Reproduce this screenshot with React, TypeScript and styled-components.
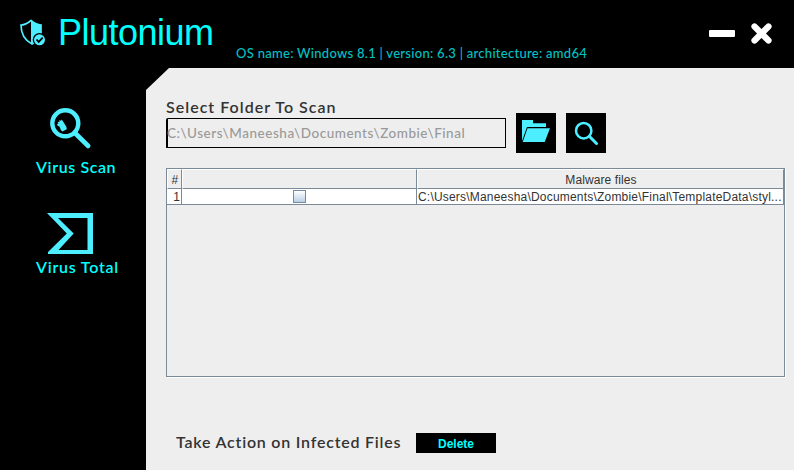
import React from "react";
import styled, { createGlobalStyle } from "styled-components";

const ICON = "#4deeff";
const LINE = "#7a8a99";

const GlobalStyle = createGlobalStyle`
  * { box-sizing: border-box; }
  body { margin: 0; background: #000; overflow: hidden; }
`;

const Window = styled.div`
  display: flex;
  flex-direction: column;
  width: 794px;
  height: 470px;
  background: #000;
  font-family: "Liberation Sans", Arial, sans-serif;
`;

const Header = styled.header`
  display: flex;
  height: 68px;
  padding-left: 20px;
  flex: none;
`;

const Logo = styled.svg`
  margin-top: 19px;
  flex: none;
`;

const Title = styled.h1`
  margin: 12px 0 0 12px;
  width: 178px;
  font-size: 36px;
  line-height: 41px;
  font-weight: 400;
  letter-spacing: -0.5px;
  color: #00ffff;
`;

const SystemInfo = styled.div`
  width: 473px;
  margin-top: 45px;
  font: 500 13px/17px Lato, sans-serif;
  letter-spacing: 0.28px;
  white-space: nowrap;
  color: #00c2c6;
`;

const WindowControls = styled.div`
  display: flex;
  gap: 16px;
  margin-top: 23px;
`;

const PlainButton = styled.button`
  display: block;
  width: max-content;
  height: max-content;
  padding: 0;
  border: 0;
  background: none;
  svg { display: block; }
`;

const Body = styled.div`
  display: flex;
  flex: 1;
`;

const Sidebar = styled.nav`
  width: 146px;
  padding: 37px 0 0 36px;
`;

const NavItem = styled.div`
  height: 100px;
  svg { display: block; margin-left: 10px; }
`;

const Label = styled.span<{ $color?: string; $spacing?: number }>`
  display: block;
  font: 600 16px/20px Lato, sans-serif;
  letter-spacing: ${(p) => p.$spacing ?? 0}px;
  white-space: nowrap;
  color: ${(p) => p.$color ?? "#333"};
`;

const Main = styled.main`
  flex: 1;
  display: flex;
  flex-direction: column;
  padding: 29px 8px 0 20px;
  background: #eee;
  clip-path: polygon(23px 0, 100% 0, 100% 100%, 0 100%, 0 22px);
`;

const FolderRow = styled.div`
  display: flex;
  align-items: flex-end;
  gap: 10px;
  height: 56px;
`;

const PathGroup = styled.div`
  width: 340px;
  height: 56px;
`;

const PathField = styled.div`
  height: 30px;
  margin-top: 1px;
  border: 1px solid #000;
  border-left-width: 2px;
  border-top-left-radius: 2px;
  font: 500 13.5px/28px Lato, sans-serif;
  letter-spacing: 0.53px;
  text-indent: -1px;
  white-space: nowrap;
  color: #999;
`;

const IconButton = styled.button`
  width: 40px;
  height: 40px;
  padding: 0;
  border: 0;
  background: #000;
  svg { display: block; }
`;

const ScrollPane = styled.div`
  width: 619px;
  height: 209px;
  margin-top: 15px;
  border: 1px solid ${LINE};
  box-shadow: 1px 1px 0 #fff;
`;

const Grid = styled.div`
  display: grid;
  grid-template-columns: 15px 235px 367px;
  font-size: 12px;
  color: #333;
`;

const HeadCell = styled.div`
  height: 20px;
  border: 1px solid #fff;
  border-right-color: ${LINE};
  border-bottom-color: ${LINE};
  line-height: 20px;
  text-align: center;
  letter-spacing: 0.1px;
  text-indent: 1px;
`;

const Cell = styled.div<{ $align?: string }>`
  display: flex;
  justify-content: ${(p) => p.$align ?? "flex-start"};
  align-items: center;
  height: 16px;
  padding: 0 1px;
  border-right: 1px solid ${LINE};
  border-bottom: 1px solid ${LINE};
  background: #fff;
  line-height: 15px;
  letter-spacing: 0.2px;
  white-space: nowrap;
`;

const CellText = styled.span`
  padding-top: 2px;
`;

const CheckBox = styled.span`
  width: 13px;
  height: 13px;
  border: 1px solid ${LINE};
  background: linear-gradient(#fff, #b8cfe5);
`;

const Actions = styled.div`
  display: flex;
  align-items: center;
  height: 20px;
  margin: 56px 0 0 10px;
`;

const ActionLabel = styled.div`
  width: 240px;
  padding-bottom: 2px;
`;

const DeleteButton = styled.button`
  width: 80px;
  height: 20px;
  padding: 2px 0 0;
  border: 0;
  background: #000;
  color: #00ffff;
  font: 700 12px/18px "Liberation Sans", Arial, sans-serif;
`;

export default function App() {
  return (
    <Window>
      <GlobalStyle />
      <Header>
        <Logo width="26" height="28" viewBox="0 0 26 28">
          <path d="M1 6C5 6 8 4 11 1.5 14 4 17 6 21 6V14C20 20 16 23 12 25 6 22 1 17 1 6Z" fill="none" stroke={ICON} strokeWidth="1.7" />
          <path d="M11 1C14 4 17 5.5 21 5.5V14C20 20 16 23 11 25Z" fill={ICON} />
          <circle cx="19.5" cy="20.8" r="6.8" fill="#000" />
          <circle cx="19.5" cy="20.8" r="5.5" fill={ICON} />
          <path d="m16.5 20.5 2.2 2.4 4-4.3" fill="none" stroke="#000" strokeWidth="1.8" />
        </Logo>
        <Title>Plutonium</Title>
        <SystemInfo>OS name: Windows 8.1 | version: 6.3 | architecture: amd64</SystemInfo>
        <WindowControls>
          <PlainButton aria-label="Minimize">
            <svg width="26" height="21"><rect y="7" width="26" height="7" rx="1" fill="#fff" /></svg>
          </PlainButton>
          <PlainButton aria-label="Close">
            <svg width="21" height="21"><path d="m3.5 3.5 14 14m0-14-14 14" stroke="#fff" strokeWidth="6.2" strokeLinecap="round" /></svg>
          </PlainButton>
        </WindowControls>
      </Header>
      <Body>
        <Sidebar>
          <NavItem>
            <svg width="50" height="52" viewBox="46 105 50 52">
              <circle cx="65.3" cy="123.3" r="13" fill="none" stroke={ICON} strokeWidth="4.4" />
              <path d="m75 133 13.2 13" stroke={ICON} strokeWidth="4.6" strokeLinecap="round" />
              <path d="m57 124 1.5-.5-1-1.5 2-.3v-1.7l1.5.8.7-1.3 1 1.5 1 1.5 2.5 4 .7 2.5-1.5 1-3 1.5-1.5-1.5-1.5-3.5-1.8-.8Z" fill={ICON} />
            </svg>
            <Label $color="#00ffff" $spacing={0.6}>Virus Scan</Label>
          </NavItem>
          <NavItem>
            <svg width="50" height="52" viewBox="46 205 50 52">
              <path d="M47 213H93V254H48V252L66.8 233.5ZM58 218 73.7 233.5 58.5 250H87.5V218Z" fill={ICON} fillRule="evenodd" />
            </svg>
            <Label $color="#00ffff" $spacing={0.75}>Virus Total</Label>
          </NavItem>
        </Sidebar>
        <Main>
          <FolderRow>
            <PathGroup>
              <Label $spacing={1.02}>Select Folder To Scan</Label>
              <PathField>C:\Users\Maneesha\Documents\Zombie\Final</PathField>
            </PathGroup>
            <IconButton aria-label="Browse">
              <svg width="40" height="40">
                <path d="M6 28V7H17V10.3H30V14H11Z" fill={ICON} />
                <path d="M11.5 15.2H34L28.7 29H6.7Z" fill={ICON} />
              </svg>
            </IconButton>
            <IconButton aria-label="Scan">
              <svg width="40" height="40" fill="none" stroke={ICON}>
                <circle cx="17.7" cy="17.7" r="7.7" strokeWidth="2.5" />
                <path d="m23.3 23.3 7.2 7.2" strokeWidth="3" strokeLinecap="round" />
              </svg>
            </IconButton>
          </FolderRow>
          <ScrollPane>
            <Grid>
              <HeadCell>#</HeadCell>
              <HeadCell />
              <HeadCell>Malware files</HeadCell>
              <Cell $align="flex-end"><CellText>1</CellText></Cell>
              <Cell $align="center"><CheckBox /></Cell>
              <Cell><CellText>C:\Users\Maneesha\Documents\Zombie\Final\TemplateData\styl...</CellText></Cell>
            </Grid>
          </ScrollPane>
          <Actions>
            <ActionLabel><Label $spacing={0.78}>Take Action on Infected Files</Label></ActionLabel>
            <DeleteButton>Delete</DeleteButton>
          </Actions>
        </Main>
      </Body>
    </Window>
  );
}
